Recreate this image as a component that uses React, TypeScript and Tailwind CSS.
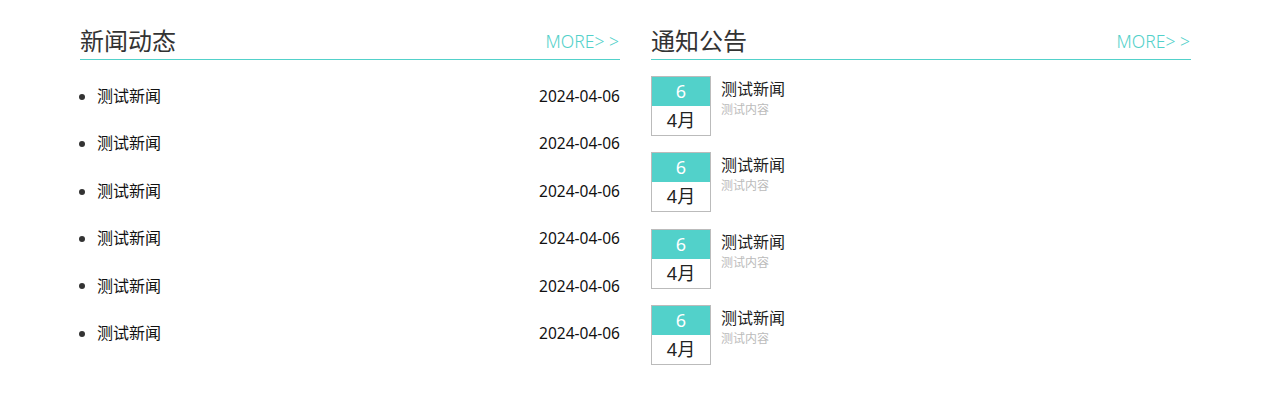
import React from "react";

const font = { fontFamily: '"Noto Sans", "Noto Sans CJK SC", sans-serif' };

function Header({ title }: { title: string }) {
  return (
    <div className="flex items-center justify-between border-b border-[#52d1ca] h-[37px]">
      <span className="text-[24px] leading-[36px] text-[#333]">{title}</span>
      <span className="text-[17.5px] leading-[36px] font-light text-[#52d1ca] mr-[1px]">MORE&gt; &gt;</span>
    </div>
  );
}

export default function App() {
  const news = Array.from({ length: 6 });
  const notices = Array.from({ length: 4 });
  return (
    <div className="bg-white w-[1264px] h-[397px] pl-[80px] pt-[23px]" style={font}>
      <div className="flex gap-[31px]">
        <div className="w-[540px]">
          <Header title="新闻动态" />
          <ul className="mt-[13px]">
            {news.map((_, i) => (
              <li key={i} className="flex items-center justify-between py-[12px] leading-[23.4px] text-[16px] text-[#111]">
                <span className="flex items-center">
                  <span className="w-[6px] h-[6px] rounded-full bg-[#333] ml-[-1px]" />
                  <span className="ml-[12px]">测试新闻</span>
                </span>
                <span className="text-[15.5px]">2024-04-06</span>
              </li>
            ))}
          </ul>
        </div>
        <div className="w-[540px]">
          <Header title="通知公告" />
          <div className="mt-[16px] flex flex-col gap-[16.4px]">
            {notices.map((_, i) => (
              <div key={i} className="flex">
                <div className="w-[60px] h-[60px] border border-[#bbb] flex flex-col">
                  <div className="h-[29px] bg-[#52d1ca] text-white text-[18px] leading-[29px] text-center">6</div>
                  <div className="flex-1 text-[18px] leading-[29px] text-center text-[#222]">4月</div>
                </div>
                <div className="ml-[10px] pt-[1px]">
                  <div className="text-[16px] leading-[24px] text-[#222]">测试新闻</div>
                  <div className="text-[12px] leading-[18px] text-[#bbb]">测试内容</div>
                </div>
              </div>
            ))}
          </div>
        </div>
      </div>
    </div>
  );
}
